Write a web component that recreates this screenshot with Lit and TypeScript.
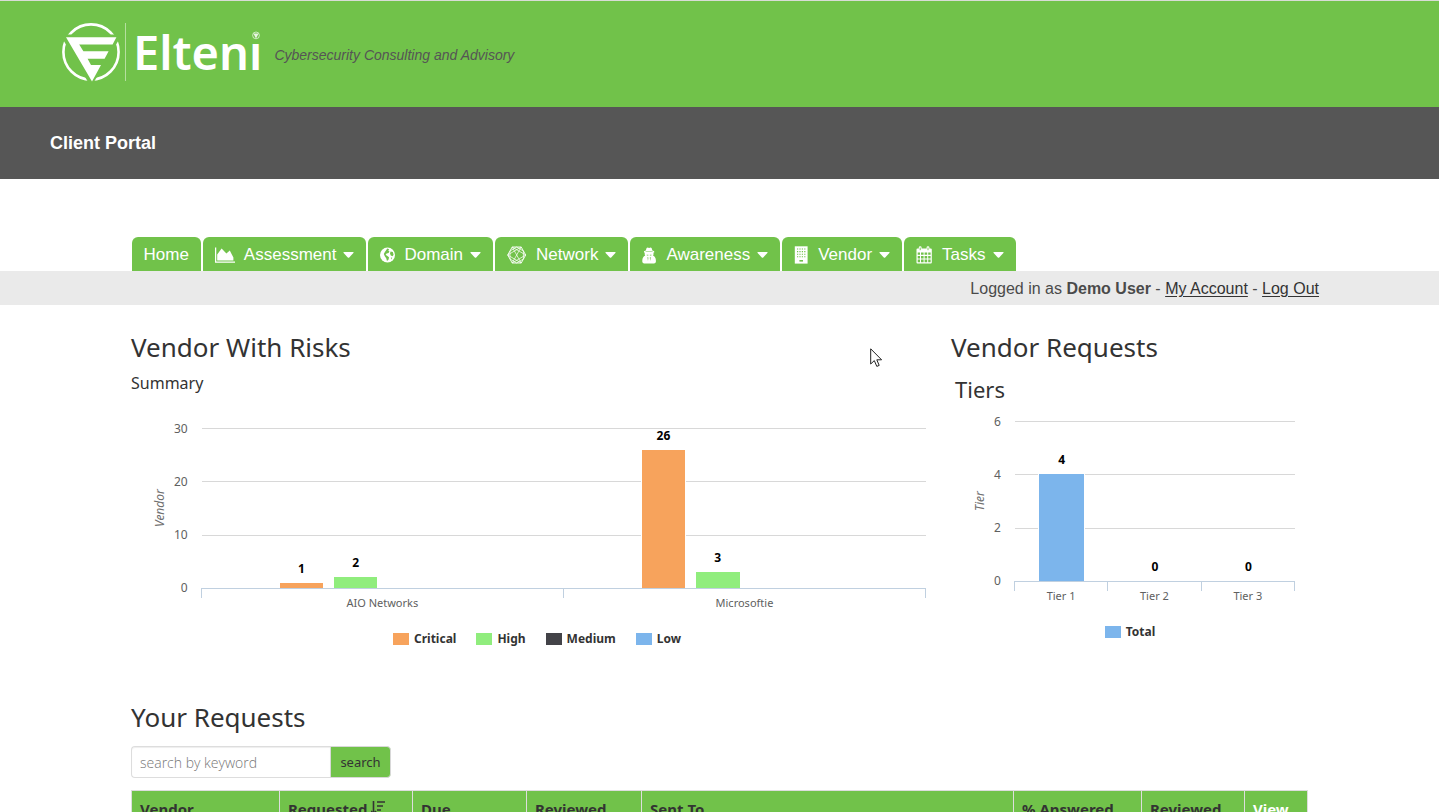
import { LitElement, html, css, svg, nothing } from "lit";
import { customElement, property } from "lit/decorators.js";
import { styleMap } from "lit/directives/style-map.js";

interface Series {
  name: string;
  color: string;
  values: (number | null)[];
}

const icons: Record<string, unknown> = {
  assessment: svg`<svg width="20" height="16" viewBox="0 0 20 16" aria-hidden="true">
    <path d="M0.6 0.5V15.2H20" fill="none" stroke="#fff" stroke-width="1.3"/>
    <path d="M2.2 13.6V7.6L6.6 1.4L11.4 6.4L14.8 3.4L18.4 10.6V13.6Z" fill="#fff"/></svg>`,
  domain: svg`<svg width="15" height="16" viewBox="0 0 15 16" aria-hidden="true">
    <circle cx="7.5" cy="8" r="7.5" fill="#fff"/>
    <path d="M7.2 1.6L9.2 2.2L8.2 3.4L9.4 4.2L8.6 6L6.6 6.4L5.6 7.8L7.4 9L9 10.2L8.6 12.4L7 14L6.2 11.2L4.8 9.2L3.8 7L5 4.8L6 3.6Z" fill="#71c24a"/>
    <path d="M10.6 4.4L12.8 5L13.6 7.8L12.6 9.2L10.8 8.4L10 6.4ZM10.8 10.8L12.2 10.4L11.2 12.4Z" fill="#71c24a"/></svg>`,
  network: svg`<svg width="20" height="18" viewBox="0 0 20 18" aria-hidden="true">
    <g fill="none" stroke="#fff" stroke-width="0.9" stroke-linejoin="round">
      <path d="M5.2 1H14.2L18.7 9L14.2 17H5.2L0.7 9Z"/>
      <path stroke-opacity="0.8" d="M5.2 1L14.2 17M14.2 1L5.2 17M5.2 1L18.7 9L5.2 17M14.2 1L0.7 9L14.2 17M9.7 1L3 5L3 13L9.7 17L16.4 13V5Z"/>
    </g></svg>`,
  awareness: svg`<svg width="15" height="17" viewBox="0 0 15 17" aria-hidden="true">
    <path d="M3.8 3.4L4.6 0.9Q5.4 0 7.1 0.9Q8.8 0 9.6 0.9L10.4 3.4L12.2 4.2V5.4H11.5V7.6L11 8.4Q13.8 9.8 13.9 13.4V14.8Q13.7 16.4 12 16.4H2.2Q0.5 16.4 0.3 14.8V13.4Q0.4 9.8 3.2 8.4L2.7 7.6V5.4H2V4.2Z" fill="#fff"/>
    <path d="M3.6 4.6H10.6V5.1H3.6ZM4.6 7.7H6.4V8.6H4.9ZM7.8 7.7H9.6L9.3 8.6H7.8ZM5.4 10L6.4 10.6L6 14ZM8.8 10L7.8 10.6L8.2 14Z" fill="#71c24a"/></svg>`,
  vendor: svg`<svg width="15" height="18" viewBox="0 0 15 18" aria-hidden="true">
    <path d="M0.8 0.3H13.6V17.6H0.8Z" fill="#fff"/>
    <path d="M3 3H11.6M3 5.6H11.6M3 8.2H11.6M3 10.8H11.6" stroke="#71c24a" stroke-width="1.1" stroke-dasharray="1.2 1.2"/>
    <path d="M5.4 14H9V15.6H5.4Z" fill="#71c24a"/></svg>`,
  tasks: svg`<svg width="17" height="18" viewBox="0 0 17 18" aria-hidden="true">
    <path d="M0.5 3.6Q0.5 2.6 1.5 2.6H2.8V1.6Q2.8 0.3 4.2 0.3Q5.6 0.3 5.6 1.6V2.6H10.6V1.6Q10.6 0.3 12 0.3Q13.4 0.3 13.4 1.6V2.6H14.8Q15.8 2.6 15.8 3.6V16.4Q15.8 17.4 14.8 17.4H1.5Q0.5 17.4 0.5 16.4Z" fill="#fff"/>
    <path d="M4.2 1.6V4.2M12 1.6V4.2" stroke="#71c24a" stroke-width="0.9"/>
    <path d="M1.7 6.4H4V8.8H1.7ZM5 6.4H7.6V8.8H5ZM8.6 6.4H11.2V8.8H8.6ZM12.2 6.4H14.6V8.8H12.2ZM1.7 9.9H4V12.4H1.7ZM5 9.9H7.6V12.4H5ZM8.6 9.9H11.2V12.4H8.6ZM12.2 9.9H14.6V12.4H12.2ZM1.7 13.5H4V16.2H1.7ZM5 13.5H7.6V16.2H5ZM8.6 13.5H11.2V16.2H8.6ZM12.2 13.5H14.6V16.2H12.2Z" fill="#71c24a"/></svg>`,
};

@customElement("bar-chart")
export class BarChart extends LitElement {
  static styles = css`
    :host {
      display: block;
      font-family: "Noto Sans", "Open Sans", sans-serif;
    }
    .chart {
      display: grid;
      grid-template-columns: 20px auto minmax(0, 1fr);
      padding: 0 var(--pad-end, 10px) 0 var(--pad-start, 15px);
    }
    .axis-title {
      writing-mode: vertical-rl;
      transform: rotate(180deg);
      font-size: 12px;
      line-height: 20px;
      font-style: italic;
      color: #707070;
      text-align: center;
    }
    .ticks {
      display: flex;
      flex-direction: column;
      justify-content: space-between;
      margin: -7px 0 -8px;
      padding: 0 14px 0 4px;
      font-size: 12px;
      line-height: 16px;
      color: #606060;
      text-align: right;
    }
    .plot {
      display: grid;
      height: 160px;
    }
    .lines,
    .groups {
      grid-area: 1 / 1;
      display: flex;
    }
    .lines {
      flex-direction: column;
    }
    .line {
      flex: 1;
      border-top: 1px solid #d8d8d8;
    }
    .group {
      flex: 1;
      display: flex;
      align-items: flex-end;
      height: 100%;
      padding: 0 calc(20% / var(--groups));
    }
    .slot {
      flex: 1;
      height: 100%;
      display: flex;
      flex-direction: column;
      justify-content: flex-end;
    }
    .value {
      font-size: 12px;
      line-height: 16px;
      font-weight: 700;
      color: #000;
      text-align: center;
      margin-bottom: 6px;
    }
    .bar {
      margin: 0 10%;
      box-shadow: 0 0 0 1px #fff;
    }
    .categories {
      grid-column: 3;
      display: flex;
      border-top: 1px solid #c0d0e0;
      margin-left: -1px;
    }
    .category {
      flex: 1;
      height: 9px;
      border-left: 1px solid #c0d0e0;
      font-size: 11px;
      line-height: 28px;
      color: #606060;
      text-align: center;
    }
    .category:last-child {
      border-right: 1px solid #c0d0e0;
    }
    .legend {
      display: flex;
      justify-content: center;
      gap: 20px;
      margin: 31px 0 0;
      padding: 0;
      list-style: none;
      font-size: 12px;
      line-height: 20px;
      font-weight: 700;
      color: #333;
    }
    .entry {
      display: flex;
      align-items: center;
      gap: 5px;
    }
    .swatch {
      width: 16px;
      height: 12px;
    }
  `;

  @property() label = "";
  @property({ type: Number }) max = 10;
  @property({ type: Number }) step = 1;
  @property({ attribute: false }) categories: string[] = [];
  @property({ attribute: false }) series: Series[] = [];

  render() {
    const count = Math.round(this.max / this.step);
    const ticks = Array.from({ length: count + 1 }, (_, i) => this.max - i * this.step);
    return html`
      <div class="chart">
        <div class="axis-title">${this.label}</div>
        <div class="ticks">${ticks.map((t) => html`<span>${t}</span>`)}</div>
        <div class="plot">
          <div class="lines">${ticks.slice(1).map(() => html`<div class="line"></div>`)}</div>
          <div class="groups">
            ${this.categories.map(
              (_, c) => html`<div class="group" style=${styleMap({ "--groups": String(this.categories.length) })}>
                ${this.series.map((s) => {
                  const v = s.values[c];
                  return html`<div class="slot">
                    ${v === null
                      ? nothing
                      : html`<span class="value">${v}</span>
                          <div
                            class="bar"
                            style=${styleMap({ height: `${(v / this.max) * 100}%`, background: s.color })}
                          ></div>`}
                  </div>`;
                })}
              </div>`
            )}
          </div>
        </div>
        <div class="categories">${this.categories.map((c) => html`<div class="category">${c}</div>`)}</div>
      </div>
      <ul class="legend">
        ${this.series.map(
          (s) => html`<li class="entry"><span class="swatch" style=${styleMap({ background: s.color })}></span>${s.name}</li>`
        )}
      </ul>
    `;
  }
}

@customElement("app-root")
export class AppRoot extends LitElement {
  static styles = css`
    :host {
      display: block;
      background: #fff;
      color: #333;
      font-family: "Liberation Sans", Arial, sans-serif;
    }
    .masthead {
      display: flex;
      align-items: center;
      padding: 0 60px 4px;
      box-sizing: border-box;
      height: 107px;
      background: #71c24a;
      border-top: 1px solid #d8dcd6;
    }
    .brand {
      display: flex;
      align-items: center;
      color: #fff;
      text-decoration: none;
    }
    .divider {
      width: 1px;
      height: 58px;
      margin: 0 7px 0 3px;
      background: #b5df9f;
    }
    .name {
      position: relative;
      font-family: "Noto Sans", sans-serif;
      font-size: 47px;
      line-height: 58px;
      font-weight: 600;
    }
    .dot {
      position: absolute;
      top: 6px;
      right: 0;
      display: block;
    }
    .tagline {
      margin: 6px 0 0 12px;
      font-size: 14px;
      line-height: 20px;
      font-style: italic;
      color: #555;
    }
    .portal {
      padding: 0 50px;
      background: #565656;
    }
    .portal h1 {
      margin: 0;
      font-size: 18px;
      line-height: 72px;
      font-weight: 700;
      color: #fff;
    }
    .wrap {
      max-width: 1177px;
      margin: 0 auto;
    }
    .tabs {
      display: flex;
      gap: 2px;
      padding: 58px 0 0 1px;
    }
    .tab {
      display: flex;
      align-items: center;
      height: 34px;
      padding: 2px 12px 0;
      border: 0;
      border-radius: 6px 6px 0 0;
      box-sizing: border-box;
      background: #71c24a;
      color: #fff;
      font: 17px/32px "Liberation Sans", Arial, sans-serif;
      text-decoration: none;
      white-space: nowrap;
    }
    .tab-label {
      margin: 0 7px 0 9px;
    }
    .account {
      background: #eaeaea;
    }
    .account-text {
      max-width: 1199px;
      margin: 0 auto;
      padding-top: 2px;
      font-size: 16px;
      line-height: 32px;
      text-align: right;
      color: #4a4a4a;
    }
    .account-text a {
      color: #333;
      text-underline-offset: 2px;
    }
    .charts {
      display: grid;
      grid-template-columns: minmax(0, 1fr) 357px;
      padding-top: 24px;
      font-family: "Noto Sans", "Open Sans", sans-serif;
    }
    h2 {
      margin: 0;
      font-family: "Noto Sans", "Open Sans", sans-serif;
      font-size: 26px;
      line-height: 36px;
      font-weight: 400;
    }
    .summary {
      margin: 8px 0 35px;
      font-size: 16px;
      line-height: 20px;
    }
    .risks {
      padding-right: 8px;
      --pad-start: 19px;
      --pad-end: 17px;
    }
    .requests {
      padding-left: 4px;
      padding-right: 3px;
    }
    .requests h2 {
      margin-left: -4px;
    }
    h3 {
      margin: 9px 0 17px;
      font-size: 22px;
      line-height: 30px;
      font-weight: 400;
    }
    .list {
      padding-top: 50px;
      font-family: "Noto Sans", "Open Sans", sans-serif;
    }
    .search {
      display: flex;
      margin: 11px 0 12px;
    }
    .search input {
      width: 199px;
      height: 32px;
      box-sizing: border-box;
      padding: 0 8px;
      border: 1px solid #ddd;
      border-right: 0;
      border-radius: 4px 0 0 4px;
      font: 300 14px "Open Sans", sans-serif;
      color: #333;
      box-shadow: inset 0 1px 1px #eee;
    }
    .search input::placeholder {
      color: #777;
    }
    .search button {
      width: 61px;
      height: 32px;
      box-sizing: border-box;
      padding: 0;
      border: 1px solid #d8d8d8;
      border-radius: 0 4px 4px 0;
      background: #71c24a;
      font: 13px "Noto Sans", sans-serif;
      color: #333;
    }
    table {
      width: 100%;
      table-layout: fixed;
      border-collapse: collapse;
      background: #71c24a;
    }
    th {
      padding: 8px;
      border: 1px solid #ddd;
      font-size: 15px;
      line-height: 20px;
      font-weight: 700;
      text-align: left;
      white-space: nowrap;
    }
    .view {
      color: #fff;
    }
    .cursor {
      position: absolute;
      left: 870px;
      top: 348px;
    }
  `;

  private tabs = [
    ["assessment", "Assessment"],
    ["domain", "Domain"],
    ["network", "Network"],
    ["awareness", "Awareness"],
    ["vendor", "Vendor"],
    ["tasks", "Tasks"],
  ];

  private risks: Series[] = [
    { name: "Critical", color: "#f7a35c", values: [1, 26] },
    { name: "High", color: "#90ed7d", values: [2, 3] },
    { name: "Medium", color: "#434348", values: [null, null] },
    { name: "Low", color: "#7cb5ec", values: [null, null] },
  ];

  private tiers: Series[] = [{ name: "Total", color: "#7cb5ec", values: [4, 0, 0] }];

  private columns: [string, number][] = [
    ["Vendor", 148],
    ["Requested", 133],
    ["Due", 114],
    ["Reviewed", 115],
    ["Sent To", 372],
    ["% Answered", 128],
    ["Reviewed", 103],
    ["View", 63],
  ];

  private emblem() {
    return svg`
      <circle cx="31" cy="31" r="27.6" fill="none" stroke="#fff" stroke-width="2.6"/>
      <path d="M0 13.4H62L31 66Z" fill="#71c24a"/>
      <path d="M6 16.2H56.4L52.6 23.4H19.2L23.4 30.2H48.6L44.6 37.8H27.6L31 44H41L32 60.6Z" fill="#fff"/>
    `;
  }

  render() {
    const total = this.columns.reduce((sum, [, w]) => sum + w, 0);
    return html`
      <header>
        <div class="masthead">
          <a class="brand" href="#">
            <svg width="62" height="62" viewBox="0 0 62 62" aria-hidden="true">${this.emblem()}</svg>
            <span class="divider"></span>
            <span class="name"
              >Elteni<svg class="dot" width="14" height="12" viewBox="0 0 14 12" aria-hidden="true">
                <rect width="14" height="12" fill="#71c24a" />
                <circle cx="8" cy="6.4" r="3.4" fill="none" stroke="#fff" stroke-opacity="0.7" stroke-width="0.9" />
                <path d="M5.4 4.6H10.6L8 9.4Z" fill="#fff" fill-opacity="0.85" /></svg
            ></span>
          </a>
          <p class="tagline">Cybersecurity Consulting and Advisory</p>
        </div>
        <div class="portal"><h1>Client Portal</h1></div>
      </header>
      <nav class="wrap tabs">
        <a class="tab" href="#">Home</a>
        ${this.tabs.map(
          ([icon, name]) => html`<button class="tab" type="button" aria-haspopup="true">
            ${icons[icon]}<span class="tab-label">${name}</span
            ><svg width="11" height="6" viewBox="0 0 11 6" aria-hidden="true">
              <path d="M1 0H10Q11 0.2 10.4 1L6.2 5.4Q5.5 6 4.8 5.4L0.6 1Q0 0.2 1 0Z" fill="#fff" />
            </svg>
          </button>`
        )}
      </nav>
      <div class="account">
        <div class="account-text">
          Logged in as <b>Demo User</b> - <a href="#">My Account</a> - <a href="#">Log Out</a>
        </div>
      </div>
      <main class="wrap">
        <div class="charts">
          <section class="risks">
            <h2>Vendor With Risks</h2>
            <p class="summary">Summary</p>
            <bar-chart
              label="Vendor"
              max="30"
              step="10"
              .categories=${["AIO Networks", "Microsoftie"]}
              .series=${this.risks}
            ></bar-chart>
          </section>
          <section class="requests">
            <h2>Vendor Requests</h2>
            <h3>Tiers</h3>
            <bar-chart
              label="Tier"
              max="6"
              step="2"
              .categories=${["Tier 1", "Tier 2", "Tier 3"]}
              .series=${this.tiers}
            ></bar-chart>
          </section>
        </div>
        <section class="list">
          <h2>Your Requests</h2>
          <form class="search">
            <input type="text" aria-label="search by keyword" placeholder="search by keyword" />
            <button type="button">search</button>
          </form>
          <table>
            <colgroup>
              ${this.columns.map(([, w]) => html`<col style=${styleMap({ width: `${(w / total) * 100}%` })} />`)}
            </colgroup>
            <thead>
              <tr>
                ${this.columns.map(
                  ([name]) => html`<th class=${name === "View" ? "view" : "head"}>${name}${name === "Requested"
                    ? html` <svg width="14" height="14" viewBox="0 0 14 14" aria-hidden="true">
                        <path d="M2.5 0V12M0 10L2.5 13L5 10M6 1H14M6 5H12M6 9H10M6 12.5H8" fill="none" stroke="#333" stroke-width="1.6" />
                      </svg>`
                    : nothing}</th>`
                )}
              </tr>
            </thead>
          </table>
        </section>
      </main>
      <svg class="cursor" width="13" height="20" viewBox="0 0 13 20" aria-hidden="true">
        <path d="M0.7 0.8V16L4.3 12.6L6.8 18.4L9.2 17.4L6.8 11.8H11.6Z" fill="#fff" stroke="#222" stroke-width="1" />
      </svg>
    `;
  }
}
